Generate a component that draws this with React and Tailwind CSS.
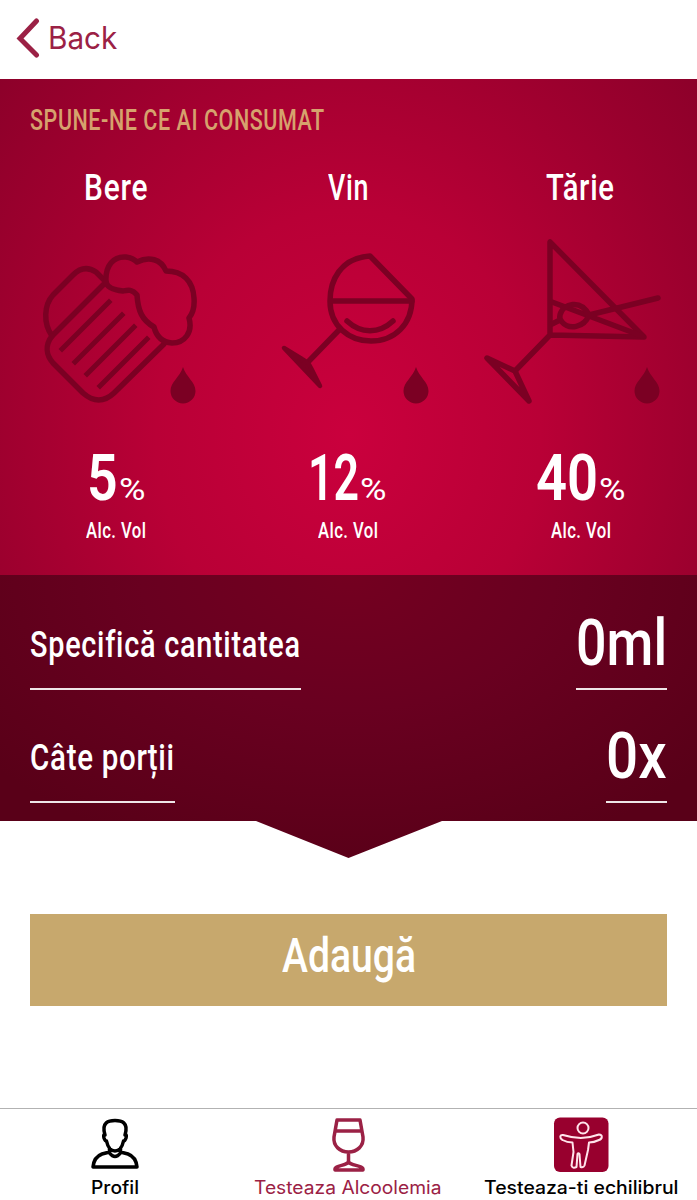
import { useLayoutEffect, useRef, useState } from "react";

// Condensed lettering: squeezes a line of text to the given width
function Condensed({ width, className = "", children }) {
  const ref = useRef(null);
  const [scale, setScale] = useState(1);

  useLayoutEffect(() => {
    setScale(width / ref.current.offsetWidth);
  }, [width]);

  return (
    <span className="block text-left" style={{ width }}>
      <span
        ref={ref}
        className={`inline-block origin-left whitespace-nowrap ${className}`}
        style={{ transform: `scaleX(${scale})` }}
      >
        {children}
      </span>
    </span>
  );
}

function Drop({ x }) {
  return (
    <path
      d={`M${x} 137C${x - 3} 147 ${x - 12.5} 152 ${x - 12.5} 161a12.5 12.5 0 0 0 25 0C${x + 12.5} 152 ${x + 3} 147 ${x} 137z`}
      fill="#7b0023"
      stroke="none"
    />
  );
}

function BeerIcon() {
  return (
    <>
      <path d="M76 52L22 106M22 106C13 93 14 75 23 65L43 45Q54 34 66 42L76 52" />
      <path d="M22 106C15 115 16 125 23 133L53 163Q69 177 84 163L134 114" />
      <path d="M32 119L79 72M45 132L92 85M57 144L104 97M70 156L117 109" strokeLinecap="square" strokeWidth="5" />
      <path d="M76 52C75 35 84 26 96 27Q103 28 107 32C119 26 131 29 136 41C153 41 163 51 164 68Q165 81 159 88C163 102 155 113 142 113C131 112 126 105 124 97C112 90 108 81 107 65C102 59 98 60 93 61C83 60 77 57 76 52z" />
      <Drop x={153} />
    </>
  );
}

function WineIcon() {
  return (
    <>
      <path d="M110 26C80 28 70 51 70 71C70 96 89 111 111 111C135 111 152 94 152 69z" />
      <path d="M71 71H152M87 91C101 104 119 104 133 91M80 99L48 132" />
      <path d="M24 118L42 129Q49 133 51 138L60 156Z" fill="#7b0023" strokeWidth="4.5" />
      <Drop x={156} />
    </>
  );
}

function MartiniIcon() {
  return (
    <>
      <path d="M80 12V105L174 107zM80 105L45 141" />
      <path d="M17 128L45 141L59 171zM82 72L172 106M82 94L88 91" />
      <path d="M90 85C93 73 111 69 119 85C114 98 99 100 92 92Q89 89 90 85zM119 85L188 68" />
      <Drop x={177} />
    </>
  );
}

const drinks = [
  { name: "Bere", nameWidth: 64, icon: BeerIcon, iconClass: "ml-[30px]", value: "5", valueWidth: 31, pad: "pl-[87px]" },
  { name: "Vin", nameWidth: 41, icon: WineIcon, iconClass: "ml-[28px]", value: "12", valueWidth: 51, pad: "pl-[76px]" },
  { name: "Tărie", nameWidth: 69, icon: MartiniIcon, iconClass: "ml-[5px]", value: "40", valueWidth: 62, pad: "pl-[71px]" },
];

function Drink({ drink }) {
  const Icon = drink.icon;
  return (
    <button className="block text-left text-white">
      <span className="flex h-[56px] justify-center">
        <Condensed width={drink.nameWidth} className="pt-px text-[36px] leading-[56px] font-medium tracking-wide">
          {drink.name}
        </Condensed>
      </span>
      <svg
        className={`mt-[15px] h-[190px] w-[210px] overflow-visible ${drink.iconClass}`}
        viewBox="0 0 210 190"
        fill="none"
        stroke="#7b0023"
        strokeWidth="5.5"
        strokeLinecap="round"
        strokeLinejoin="round"
      >
        <Icon />
      </svg>
      <span className={`mt-[21px] flex h-[76px] items-baseline gap-[1px] ${drink.pad}`}>
        <Condensed width={drink.valueWidth} className="text-[64px] leading-[76px] font-semibold">
          {drink.value}
        </Condensed>
        <Condensed width={26} className="text-[32px]">%</Condensed>
      </span>
      <span className="-mt-[4px] flex h-[36px] justify-center">
        <Condensed width={60} className="text-[22px] leading-[36px] font-medium tracking-wide">Alc. Vol</Condensed>
      </span>
    </button>
  );
}

function AmountRow({ label, labelWidth, value, valueWidth }) {
  return (
    <div className="flex h-[77px] items-stretch justify-between">
      <div className="border-b-2 border-white/90 pt-[7px]">
        <Condensed width={labelWidth} className="text-[36px] leading-[50px] font-medium tracking-wide">{label}</Condensed>
      </div>
      <div className="-mt-px border-b-2 border-white/90">
        <Condensed width={valueWidth} className="text-[65px] leading-[62px] font-medium">{value}</Condensed>
      </div>
    </div>
  );
}

function TabItem({ label, className, children }) {
  return (
    <button className={`flex flex-col items-center pt-[8px] ${className}`}>
      <svg
        className="h-[56px] w-[56px] shrink-0"
        viewBox="0 0 56 56"
        fill="none"
        stroke="currentColor"
        strokeWidth="3.5"
        strokeLinejoin="round"
        strokeLinecap="round"
      >
        {children}
      </svg>
      <span className="flex h-[26px] pt-[2px]">{label}</span>
    </button>
  );
}

export default function App() {
  return (
    <div className="flex h-[1200px] w-[697px] flex-col overflow-hidden bg-white font-['Roboto',sans-serif]">
      <header className="flex h-[79px] shrink-0 items-center pl-[16px] text-[#9b2145]">
        <svg className="-mt-[4px] h-[42px] w-[24px]" viewBox="0 0 24 42" fill="none" stroke="currentColor" strokeWidth="5" strokeLinecap="round" strokeLinejoin="miter">
          <path d="M20.5 4L4 21.5L20.5 38" />
        </svg>
        <div className="-mt-[3px] pl-[8px] font-['Inter',sans-serif]">
          <Condensed width={69} className="text-[31px] leading-[40px]">Back</Condensed>
        </div>
      </header>

      <section className="h-[496px] shrink-0 bg-[radial-gradient(ellipse_480px_560px_at_50%_355px,#ca003d_0%,#b90036_40%,#9c002e_76%,#8a0029_100%)]">
        <h1 className="h-[80px] pt-[21px] pl-[30px] text-[#d6a26d]">
          <Condensed width={295} className="text-[29px] leading-[40px] font-medium tracking-wide">SPUNE-NE CE AI CONSUMAT</Condensed>
        </h1>
        <div className="grid grid-cols-[repeat(3,232.33px)]">
          {drinks.map((drink) => (
            <Drink key={drink.name} drink={drink} />
          ))}
        </div>
      </section>

      <section className="h-[283px] shrink-0 bg-[radial-gradient(ellipse_460px_300px_at_50%_0px,#740020_0%,#690020_45%,#590018_100%)] px-[30px] pt-[38px] text-white [clip-path:polygon(0_0,100%_0,100%_246px,442px_246px,348.5px_283px,256px_246px,0_246px)]">
        <div className="flex flex-col gap-[36px]">
          <AmountRow label="Specifică cantitatea" labelWidth={271} value="0ml" valueWidth={91} />
          <AmountRow label="Câte porții" labelWidth={145} value="0x" valueWidth={61} />
        </div>
      </section>

      <div className="px-[30px] pt-[56px]">
        <button className="flex h-[92px] w-full justify-center bg-[#c7a86d] text-white">
          <Condensed width={134} className="text-[49px] leading-[84px] font-medium">Adaugă</Condensed>
        </button>
      </div>

      <nav className="mt-auto grid h-[92px] shrink-0 grid-cols-[repeat(3,232.33px)] border-t border-[#b2b2b2] font-['Inter',sans-serif] text-black">
        <TabItem
          label={<Condensed width={48} className="text-[18px] leading-[26px] font-medium">Profil</Condensed>}
          className="pr-[2px]"
        >
          <path d="M18 18C14 5 22 3.5 28 3.5S42 5 38 18M18 18Q16 17 17 21Q18 24 19.5 24C21 31 24 34 28 34S35 31 36.5 24Q38 24 39 21Q40 17 38 18M22.5 31V36Q28 43 33.5 36V31M22.5 35L15 37Q7 40 6 50H50Q49 40 41 37L33.5 35" />
        </TabItem>
        <TabItem
          label={<Condensed width={188} className="text-[18px] leading-[26px]">Testeaza Alcoolemia</Condensed>}
          className="text-[#9b2145]"
        >
          <path d="M17 3H40L43 20C44 29 37 35 28.5 35S13 29 14 20zM16 14H41M28.5 35V46M28.5 45C26 49 14 48 15 53H43C44 48 31 49 28.5 45" />
        </TabItem>
        <TabItem
          label={<Condensed width={194} className="text-[18px] leading-[26px] font-medium">Testeaza-ti echilibrul</Condensed>}
          className=""
        >
          <rect x="1" y="0.5" width="54.5" height="54.5" rx="6" fill="#98002e" stroke="none" />
          <g stroke="#ffe4eb" strokeWidth="2">
            <circle cx="30" cy="11" r="5.5" />
            <path d="M10 18Q29 24 46 17.5C50 17.5 49.5 22 46 23Q41 25.5 36 25.5L35 33L31.5 48.5Q30.5 51 27.5 50L26.5 37Q25.3 35.5 24.5 37L23.5 50Q19.5 52 18.5 48.5L20.5 35L19.5 25.5Q14 25.5 9.5 23C6.5 21.5 6.5 17.5 10 18z" />
          </g>
        </TabItem>
      </nav>
    </div>
  );
}
